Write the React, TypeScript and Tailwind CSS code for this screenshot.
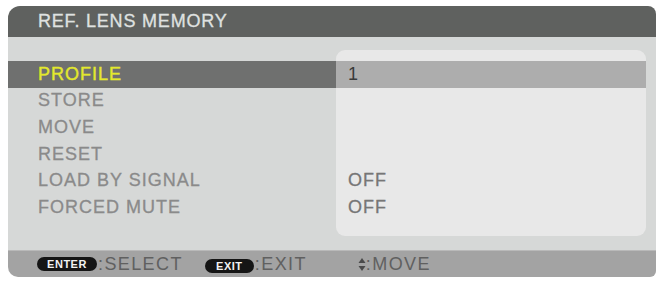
import React from "react";

const rows = [
  { label: "PROFILE", value: "1", selected: true },
  { label: "STORE", value: "" },
  { label: "MOVE", value: "" },
  { label: "RESET", value: "" },
  { label: "LOAD BY SIGNAL", value: "OFF" },
  { label: "FORCED MUTE", value: "OFF" },
];

function KeyBadge({ text, width }: { text: string; width: string }) {
  return (
    <span
      className={`inline-flex h-[14px] items-center justify-center rounded-full bg-[#151515] text-[11px] font-bold tracking-[0.5px] text-[#f2f2f2] ${width}`}
    >
      {text}
    </span>
  );
}

export default function App() {
  return (
    <div
      className="min-h-[282px] w-[662px] bg-white pl-[8px] pt-[6px]"
      style={{ fontFamily: '"Liberation Sans", Arial, sans-serif' }}
    >
      <div className="flex w-[648px] flex-col">
        {/* Title bar */}
        <div className="flex h-[31px] items-center rounded-tl-[12px] rounded-tr-[8px] bg-[#5f615f] pl-[30px] text-[18px] tracking-[0.8px] text-[#dfe1e0] [-webkit-text-stroke:0.3px_#dfe1e0]">
          REF. LENS MEMORY
        </div>

        {/* Body */}
        <div className="flex h-[213px] bg-[#d6d8d7]">
          <div className="flex w-[328px] flex-col pt-[24px]">
            {rows.map((r) => (
              <div
                key={r.label}
                className={`flex h-[26.6px] items-center pl-[30px] text-[18px] tracking-[1px] ${
                  r.selected
                    ? "bg-[#6f706f] text-[#e3e82c] [-webkit-text-stroke:0.4px_#e3e82c]"
                    : "text-[#8a8a8a] [-webkit-text-stroke:0.3px_#8a8a8a]"
                }`}
              >
                {r.label}
              </div>
            ))}
          </div>
          <div className="mb-[14px] mt-[13px] flex w-[310px] flex-col overflow-hidden rounded-[9px] bg-[#e8e8e8] pt-[11px]">
            {rows.map((r) => (
              <div
                key={r.label}
                className={`flex h-[26.6px] items-center pl-[12px] text-[18px] tracking-[1px] ${
                  r.selected
                    ? "bg-[#adadad] text-[#3a3a3a]"
                    : "text-[#767676] [-webkit-text-stroke:0.3px_#767676]"
                }`}
              >
                {r.value}
              </div>
            ))}
          </div>
        </div>

        {/* Footer */}
        <div className="flex h-[27px] items-center rounded-bl-[10px] rounded-br-[6px] border-t border-[#b9b9b9] bg-[#a3a3a3] pl-[29px] text-[18px] tracking-[1.4px] text-[#606060]">
          <KeyBadge text="ENTER" width="w-[60px]" />
          <span className="ml-[1px]">:SELECT</span>
          <span className="ml-[22px]">
            <KeyBadge text="EXIT" width="w-[49px]" />
          </span>
          <span className="ml-[1px]">:EXIT</span>
          <svg
            className="ml-[51px]"
            width="8"
            height="13"
            viewBox="0 0 8 13"
          >
            <path d="M4 0 L7.5 5 L0.5 5 Z" fill="#4a4a4a" />
            <path d="M4 13 L7.5 8 L0.5 8 Z" fill="#4a4a4a" />
          </svg>
          <span>:MOVE</span>
        </div>
      </div>
    </div>
  );
}
